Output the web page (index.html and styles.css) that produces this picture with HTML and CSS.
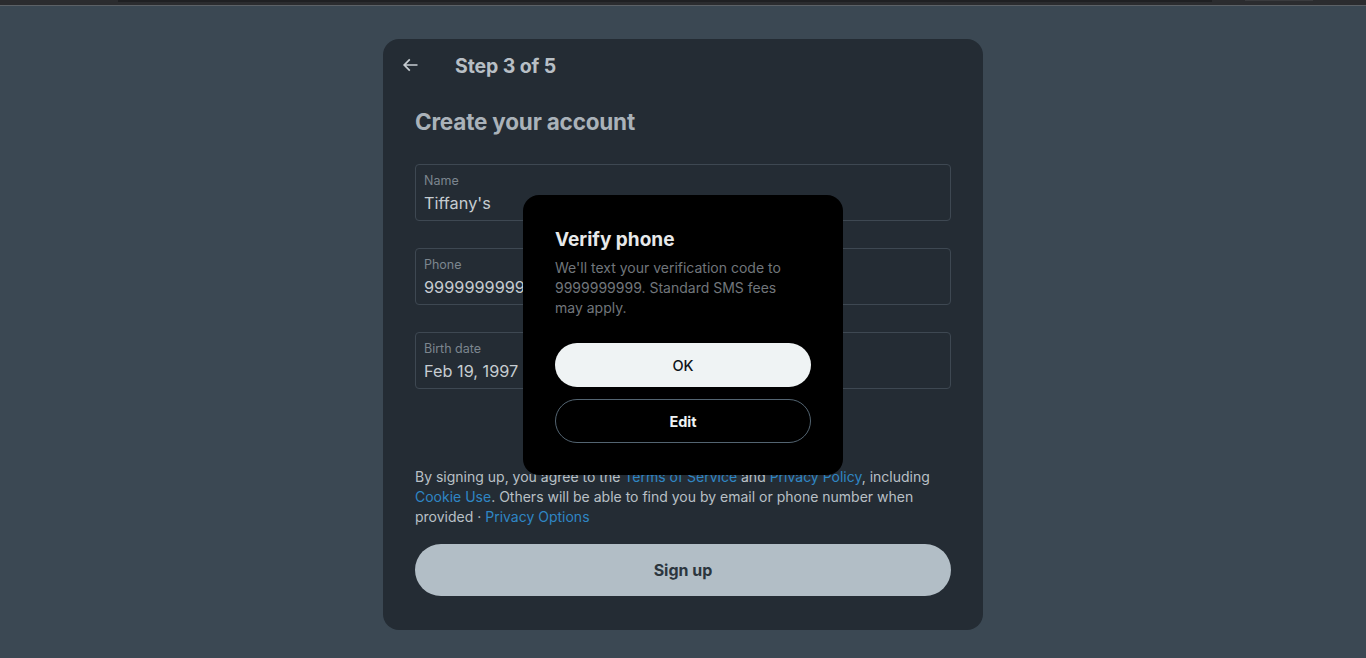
FILE: index.html
```html
<!DOCTYPE html>
<html>
<head>
<meta charset="utf-8">
<link rel="stylesheet" href="styles.css">
</head>
<body>
<div class="topstrip"><div class="tab-bar"></div><div class="tab-small"></div></div>
<main class="stage">
  <section class="card">
    <header class="card-head">
      <svg class="back" viewBox="0 0 24 24" width="20" height="20"><path d="M7.414 13l5.043 5.04-1.414 1.42L3.586 12l7.457-7.46 1.414 1.42L7.414 11H21v2H7.414z" fill="currentColor"/></svg>
      <h2 class="step">Step 3 of 5</h2>
    </header>
    <div class="card-body">
      <h1 class="title">Create your account</h1>
      <div class="fields">
        <div class="field"><span class="label">Name</span><span class="value">Tiffany's</span></div>
        <div class="field"><span class="label">Phone</span><span class="value">9999999999</span></div>
        <div class="field"><span class="label">Birth date</span><span class="value">Feb 19, 1997</span></div>
      </div>
      <p class="terms">By signing up, you agree to the <a>Terms of Service</a> and <a>Privacy Policy</a>, including <a>Cookie Use</a>. Others will be able to find you by email or phone number when provided · <a>Privacy Options</a></p>
      <button class="signup">Sign up</button>
    </div>
  </section>
</main>
<div class="dialog">
  <h3 class="dlg-title">Verify phone</h3>
  <p class="dlg-text">We'll text your verification code to 9999999999. Standard SMS fees may apply.</p>
  <button class="btn-ok">OK</button>
  <button class="btn-edit">Edit</button>
</div>
</body>
</html>
```
FILE: styles.css
```css
* { box-sizing: border-box; }
html, body { margin: 0; padding: 0; }
body {
  background: #3b4853;
  font-family: "Inter", "Liberation Sans", sans-serif;
  height: 658px;
  overflow: hidden;
  position: relative;
}
.topstrip {
  height: 6px;
  background: #2b2c2f;
  border-bottom: 1px solid #5c6166;
  display: flex;
  padding-left: 118px;
}
.tab-bar { width: 1094px; height: 2px; background: #1f2023; }
.tab-small { width: 68px; height: 1px; margin-left: 33px; background: #3a3b3e; }
.stage { display: flex; justify-content: center; padding-top: 33px; }
.card {
  width: 600px;
  height: 591px;
  background: #242c34;
  border-radius: 16px;
  display: flex;
  flex-direction: column;
}
.card-head {
  height: 53px;
  display: flex;
  align-items: center;
  padding-left: 17px;
}
.back { color: #c6ccd1; margin-top: -1px; }
.step {
  margin: 0 0 0 35px;
  font-size: 19.5px;
  font-weight: 700;
  color: #b8bfc5;
  letter-spacing: -0.1px;
}
.card-body { padding: 0 32px; display: flex; flex-direction: column; }
.title {
  margin: 16px 0 0;
  font-size: 22.5px;
  font-weight: 700;
  color: #aab2b9;
  height: 28px;
  line-height: 28px;
  letter-spacing: -0.2px;
}
.fields { display: flex; flex-direction: column; gap: 27px; margin-top: 28px; }
.field {
  height: 57px;
  border: 1px solid #3e4852;
  border-radius: 4px;
  display: flex;
  flex-direction: column;
  padding: 8px 8px 0;
}
.label { font-size: 12.5px; color: #7c868f; line-height: 16px; }
.value { font-size: 16.3px; color: #c6ccd1; line-height: 22px; margin-top: 3px; }
.terms {
  margin: 78px 0 0;
  font-size: 14px;
  line-height: 20px;
  color: #b9c0c6;
}
.terms a { color: #2f86c4; }
.signup {
  margin-top: 17px;
  height: 52px;
  border: none;
  border-radius: 26px;
  background: #b2bec6;
  color: #2c363e;
  font-family: inherit;
  font-size: 16px;
  font-weight: 700;
}
.dialog {
  position: absolute;
  left: 523px;
  top: 195px;
  width: 320px;
  height: 280px;
  background: #000;
  border-radius: 16px;
  padding: 33px 32px 0;
  display: flex;
  flex-direction: column;
}
.dlg-title {
  margin: 0;
  font-size: 19px;
  font-weight: 700;
  color: #e7e9ea;
  line-height: 24px;
}
.dlg-text {
  margin: 6px 0 0;
  max-width: 240px;
  font-size: 14px;
  line-height: 20px;
  color: #71767b;
}
.btn-ok, .btn-edit {
  height: 44px;
  border-radius: 22px;
  font-family: inherit;
  font-size: 14.5px;
  font-weight: 700;
}
.btn-ok {
  margin-top: 25px;
  background: #eff3f4;
  border: none;
  color: #0f1419;
  font-weight: 500;
}
.btn-edit {
  margin-top: 12px;
  background: #000;
  border: 1px solid #536471;
  color: #eff3f4;
}
```
